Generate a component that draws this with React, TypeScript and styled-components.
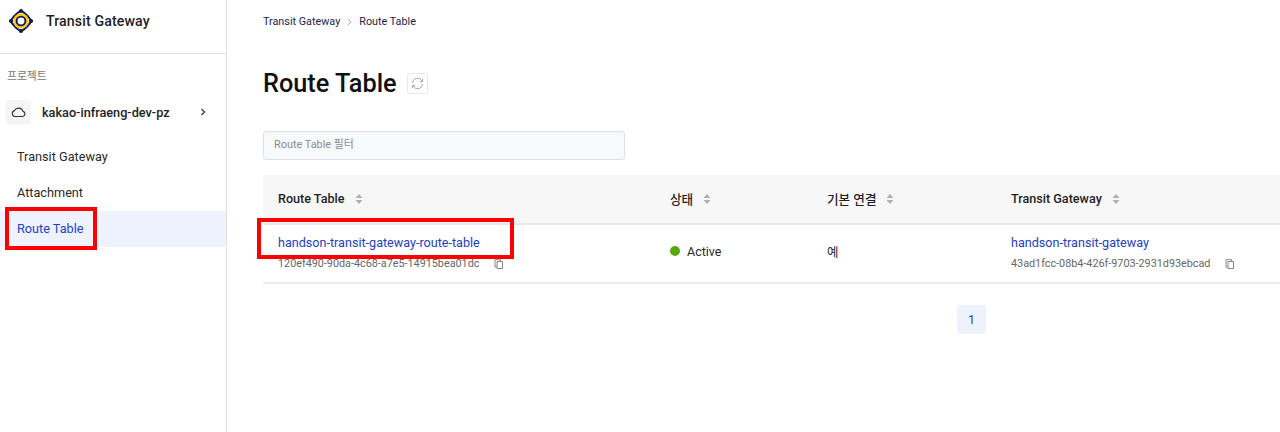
import React from "react";
import styled, { createGlobalStyle } from "styled-components";

const Global = createGlobalStyle`
  html, body { margin: 0; padding: 0; background: #fff; }
  body { font-family: Roboto, "Noto Sans CJK KR", sans-serif; color: #1a1a1a; overflow: hidden; }
`;
const Page = styled.div`display: flex; width: 1280px; height: 432px; overflow: hidden; position: relative;`;
const Sidebar = styled.aside`width: 227px; box-sizing: border-box; flex: none; border-right: 1px solid #e2e2e2; height: 432px;`;
const Brand = styled.div`display: flex; align-items: center; gap: 12px; height: 54px; padding: 0 0 12px 8px; box-sizing: border-box; border-bottom: 1px solid #e2e2e2; font-size: 14.2px; font-weight: 500; color: #1f1f24; letter-spacing: .1px;`;
const SectionLabel = styled.div`font-size: 10.8px; color: #777; padding: 16px 0 0 7px; line-height: 14px;`;
const Project = styled.div`display: flex; align-items: center; margin: 15px 0 0 6px; height: 26px; font-size: 12.7px; font-weight: 500; color: #222; width: 200px;`;
const CloudBox = styled.div`width: 25px; height: 25px; border-radius: 4px; background: #f5f5f5; display: flex; align-items: center; justify-content: center; margin-right: 11px;`;
const ProjectName = styled.span`flex: 1;`;
const NavList = styled.nav`margin-top: 14px; display: flex; flex-direction: column;`;
const NavItem = styled.div<{ $active?: boolean }>`height: 36px; line-height: 36px; padding-left: 17px; font-size: 12.7px; color: ${p => p.$active ? "#2340c8" : "#2a2a2a"}; background: ${p => p.$active ? "#eef2fd" : "transparent"};`;
const Main = styled.main`flex: 1; min-width: 0; padding: 15px 0 0 36px; box-sizing: border-box;`;
const Crumbs = styled.div`display: flex; align-items: center; font-size: 10.8px; line-height: 13px; color: #1c1c50; height: 13px;`;
const CrumbSep = styled.span`margin: 0 7px 0 7px; display: inline-flex; color: #aaa;`;
const TitleRow = styled.div`display: flex; align-items: center; gap: 10px; margin-top: 39px; height: 32px;`;
const Title = styled.h1`margin: 2px 0 0; font-size: 25.3px; font-weight: 500; line-height: 32px; color: #111;`;
const RefreshBtn = styled.div`width: 21px; height: 21px; box-sizing: border-box; border: 1px solid #e8e8e8; border-radius: 3px; display: flex; align-items: center; justify-content: center;`;
const Filter = styled.div`margin-top: 32px; width: 362px; height: 29px; box-sizing: border-box; background: #f8f9fb; border: 1px solid #dcdfe6; border-radius: 3px; padding-left: 10px; font-size: 10.9px; color: #8c8c8c; line-height: 26px;`;
const Table = styled.div`margin-top: 15px; width: 1100px;`;
const HeadRow = styled.div`display: grid; grid-template-columns: 392px 157px 184px 1fr; height: 50px; background: #f7f7f7; border-bottom: 2px solid #e9e9e9; box-sizing: border-box;`;
const HeadCell = styled.div`display: flex; align-items: center; gap: 10px; padding: 0 0 1px 15px; font-size: 12.6px; font-weight: 500; color: #1f1f1f;`;
const BodyRow = styled.div`display: grid; grid-template-columns: 392px 157px 184px 1fr; height: 59px; border-bottom: 2px solid #ececec; box-sizing: border-box;`;
const BodyCell = styled.div`display: flex; flex-direction: column; justify-content: center; padding-left: 15px; font-size: 12.5px; color: #2a2a2a; padding-bottom: 5px;`;
const LinkCell = styled(BodyCell)`padding-bottom: 1px;`;
const LinkText = styled.div`color: #2340c0; font-size: 12.6px; line-height: 16px;`;
const IdRow = styled.div`display: flex; align-items: center; gap: 15px; font-size: 10.8px; color: #666; line-height: 14px; margin-top: 6px;`;
const Status = styled.div`display: flex; align-items: center; gap: 7px;`;
const Dot = styled.span`width: 10px; height: 10px; border-radius: 50%; background: #57a80e;`;
const Pager = styled.div`display: flex; margin: 21px 0 0 694px;`;
const PageBtn = styled.div`width: 29px; height: 29px; border-radius: 3px; background: #eef2fd; color: #2340c0; font-size: 12.5px; display: flex; align-items: center; justify-content: center;`;
const Highlight = styled.div<{ $l: number; $t: number; $w: number; $h: number }>`position: absolute; left: ${p => p.$l}px; top: ${p => p.$t}px; width: ${p => p.$w}px; height: ${p => p.$h}px; box-sizing: border-box; border: 4px solid #f00; pointer-events: none;`;

const Sort = () => (
  <svg width="8" height="12" viewBox="0 0 8 12"><path d="M4 1 7.5 5H.5zM4 11 .5 7h7z" fill="#b0b0b0" /></svg>
);
const Copy = () => (
  <svg width="10" height="10" viewBox="0 0 10 10" fill="none" stroke="#888" strokeWidth="1"><path d="M3 2.5h5.5v7H3zM3 8H1V.7h5.5v1.8" /></svg>
);
const Logo = () => (
  <svg width="26" height="26" viewBox="0 0 26 26" fill="none">
    <path d="M13 2.5Q19.5 6.5 23.5 13 19.5 19.5 13 23.5 6.5 19.5 2.5 13 6.5 6.5 13 2.5z" stroke="#15185c" strokeWidth="2" strokeLinejoin="round" fill="#fff" />
    <circle cx="13" cy="13" r="6.2" stroke="#f5cf10" strokeWidth="3" />
    <circle cx="13" cy="13" r="4.4" stroke="#15185c" strokeWidth="1.9" fill="#fff" />
    <g fill="#15185c"><circle cx="13" cy="3" r="2.1" /><circle cx="13" cy="23" r="2.1" /><circle cx="3" cy="13" r="2.1" /><circle cx="23" cy="13" r="2.1" /></g>
  </svg>
);

export default function App() {
  return (
    <Page>
      <Global />
      <Sidebar>
        <Brand><Logo />Transit Gateway</Brand>
        <SectionLabel>프로젝트</SectionLabel>
        <Project>
          <CloudBox>
            <svg width="15" height="12" viewBox="0 0 15 12" fill="none" stroke="#333" strokeWidth="1.1"><path d="M4 10.5h7.5a2.6 2.6 0 0 0 .5-5.1A4.6 4.6 0 0 0 3.5 4.6 3 3 0 0 0 4 10.5z" /></svg>
          </CloudBox>
          <ProjectName>kakao-infraeng-dev-pz</ProjectName>
          <svg width="6" height="8" viewBox="0 0 6 8" fill="none" stroke="#333" strokeWidth="1.2"><path d="M1.5 1 4.5 4 1.5 7" /></svg>
        </Project>
        <NavList>
          <NavItem>Transit Gateway</NavItem>
          <NavItem>Attachment</NavItem>
          <NavItem $active>Route Table</NavItem>
        </NavList>
      </Sidebar>
      <Main>
        <Crumbs>
          Transit Gateway
          <CrumbSep><svg width="5" height="8" viewBox="0 0 5 8" fill="none" stroke="#aaa"><path d="M1 1 4 4 1 7" /></svg></CrumbSep>
          Route Table
        </Crumbs>
        <TitleRow>
          <Title>Route Table</Title>
          <RefreshBtn>
            <svg width="13" height="13" viewBox="0 0 13 13" fill="none" stroke="#aaa" strokeWidth="1"><path d="M1.5 6A5 5 0 0 1 10.5 3.2L11.5 4.5M11.5 1.8v2.7H9M11.5 7A5 5 0 0 1 2.5 9.8L1.5 8.5M1.5 11.2V8.5H4" /></svg>
          </RefreshBtn>
        </TitleRow>
        <Filter>Route Table 필터</Filter>
        <Table>
          <HeadRow>
            <HeadCell>Route Table <Sort /></HeadCell>
            <HeadCell>상태 <Sort /></HeadCell>
            <HeadCell>기본 연결 <Sort /></HeadCell>
            <HeadCell>Transit Gateway <Sort /></HeadCell>
          </HeadRow>
          <BodyRow>
            <LinkCell>
              <LinkText>handson-transit-gateway-route-table</LinkText>
              <IdRow>120ef490-90da-4c68-a7e5-14915bea01dc <Copy /></IdRow>
            </LinkCell>
            <BodyCell><Status><Dot />Active</Status></BodyCell>
            <BodyCell>예</BodyCell>
            <LinkCell>
              <LinkText>handson-transit-gateway</LinkText>
              <IdRow>43ad1fcc-08b4-426f-9703-2931d93ebcad <Copy /></IdRow>
            </LinkCell>
          </BodyRow>
        </Table>
        <Pager><PageBtn>1</PageBtn></Pager>
      </Main>
      <Highlight $l={5} $t={207} $w={92} $h={43} />
      <Highlight $l={257} $t={218} $w={257} $h={41} />
    </Page>
  );
}
